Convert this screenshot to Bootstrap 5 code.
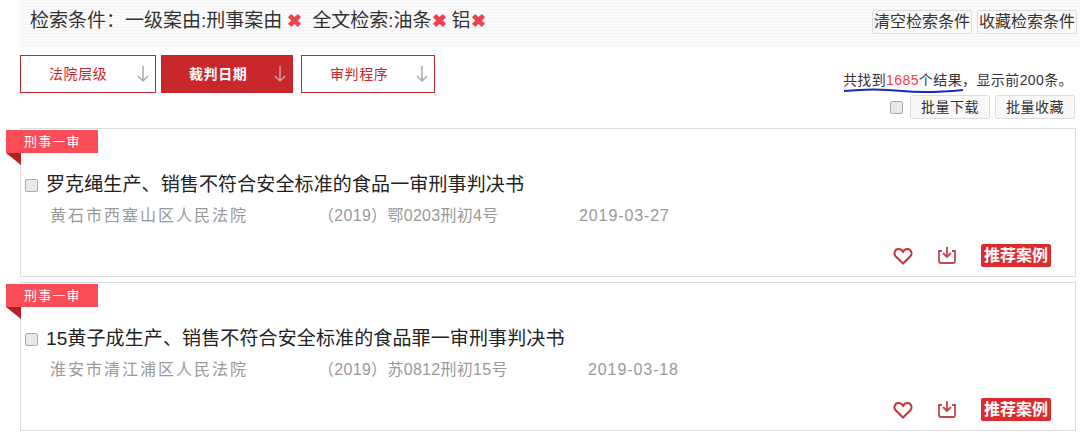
<!DOCTYPE html>
<html lang="zh-CN">
<head>
  <meta charset="UTF-8" />
  <meta name="viewport" content="width=device-width, initial-scale=1" />
  <title>检索结果</title>
  <link href="https://cdn.jsdelivr.net/npm/bootstrap@5.3.0/dist/css/bootstrap.min.css" rel="stylesheet" />
  <style>
    body { font-family: "Liberation Sans", "Noto Sans CJK SC", sans-serif; color: #333; background: #fff; overflow: hidden; }
    .page-box { width: 1080px; height: 435px; padding-left: 20px; }
    .search-bar { height: 48px; padding: 5px 3px 0 10px; background: repeating-linear-gradient(#f4f4f4 0 1px, #fbfbfb 1px 3px); }
    .search-text { font-size: 19px; line-height: 32px; }
    .x-mark { color: #f0404a; font-weight: 700; font-size: 18px; }
    .x-gap-a { margin: 0 10px 0 5px; }
    .x-gap-b { margin-right: 5px; }
    .plain-btn { background: #f8f8f8; border: 1px solid #ddd; border-radius: 2px; color: #333; font-size: 16px; line-height: 22px; padding: 0 1px; }
    .small-btn { font-size: 14px; letter-spacing: .5px; padding: 0 10px; }
    .btn-pair { gap: 5px; padding-top: 5px; }
    .filter-row { margin-top: 7px; height: 38px; }
    .filter-btn { height: 38px; border: 1px solid #c8272c; background: #fff; color: #c8272c; font-size: 14px; letter-spacing: .6px; position: relative; }
    .filter-btn.is-on { background: #c8272c; color: #fff; font-weight: 700; }
    .filter-arrow { position: absolute; right: 5px; top: 9px; }
    .result-info { font-size: 14px; line-height: 20px; padding: 22px 7px 0 0; position: relative; }
    .count-line { letter-spacing: .4px; }
    .count-num { color: #f0404a; }
    .scribble { position: absolute; left: 0; top: 16px; }
    .batch-row { margin: 5px -2px 0 0; }
    .result-head { height: 72px; }
    .check-box { width: 13px; height: 13px; background: #e9e9e9; border: 1px solid #aaa; border-radius: 2px; flex: none; }
    .case-box { width: 1056px; height: 149px; border: 1px solid #ddd; position: relative; padding: 43px 0 0 4px; margin-bottom: 5px; }
    .case-tag { position: absolute; left: -15px; top: 1px; width: 92px; height: 23px; padding-left: 18px; background: #fb4d58; color: #fff; font-size: 13px; line-height: 23px; letter-spacing: 1.2px; }
    .tag-fold { position: absolute; left: -15px; top: 24px; width: 0; height: 0; border-top: 12px solid #b81d24; border-left: 15px solid transparent; }
    .case-title { font-size: 19px; line-height: 26px; color: #222; letter-spacing: .12px; }
    .case-meta { font-size: 16px; line-height: 22px; color: #999; padding: 7px 0 0 25px; }
    .court-name { width: 268px; letter-spacing: 2px; }
    .case-no { letter-spacing: .3px; }
    .case-date { letter-spacing: .9px; }
    .case-actions { position: absolute; right: 24px; bottom: 9px; }
    .recommend-tag { background: #dc2a2e; color: #fff; font-size: 16px; font-weight: 700; line-height: 23px; padding: 0 3px; border-radius: 2px; }
  </style>
  <script src="https://cdn.jsdelivr.net/npm/bootstrap@5.3.0/dist/js/bootstrap.bundle.min.js"></script>
</head>
<body>
  <div class="page-box">
    <div class="search-bar d-flex justify-content-between align-items-start">
      <div class="search-text d-flex text-nowrap">
        <span>检索条件：一级案由:刑事案由</span><span class="x-mark x-gap-a">✖</span>
        <span>全文检索:油条</span><span class="x-mark x-gap-b">✖</span>
        <span>铝</span><span class="x-mark">✖</span>
      </div>
      <div class="d-flex btn-pair">
        <button class="plain-btn">清空检索条件</button>
        <button class="plain-btn">收藏检索条件</button>
      </div>
    </div>

    <div class="d-flex justify-content-between result-head">
      <div class="filter-row d-flex">
        <button class="filter-btn text-start" style="width:136px;padding-left:28px">法院层级<svg class="filter-arrow" width="14" height="18" viewBox="0 0 14 18" fill="none" stroke="#aaa" stroke-width="1.5"><path d="M7 1v15M2 11l5 5 5-5"/></svg></button>
        <button class="filter-btn is-on text-start" style="width:132px;padding-left:27px;margin-left:5px">裁判日期<svg class="filter-arrow" width="14" height="18" viewBox="0 0 14 18" fill="none" stroke="#c9a0a0" stroke-width="1.5"><path d="M7 1v15M2 11l5 5 5-5"/></svg></button>
        <button class="filter-btn text-start" style="width:134px;padding-left:28px;margin-left:8px">审判程序<svg class="filter-arrow" width="14" height="18" viewBox="0 0 14 18" fill="none" stroke="#aaa" stroke-width="1.5"><path d="M7 1v15M2 11l5 5 5-5"/></svg></button>
      </div>
      <div class="result-info text-end">
        <div class="position-relative count-line">共找到<span class="count-num">1685</span>个结果，显示前200条。
          <svg class="scribble" width="122" height="8" viewBox="0 0 122 8" fill="none" stroke="#1a25c8" stroke-width="2"><path d="M1 5c20-2 40-2 58 0 20 2 40 1 61-1"/></svg>
        </div>
        <div class="batch-row d-flex justify-content-end align-items-center">
          <span class="check-box" style="margin-right:7px"></span>
          <button class="plain-btn small-btn" style="margin-right:5px">批量下载</button>
          <button class="plain-btn small-btn">批量收藏</button>
        </div>
      </div>
    </div>

    <div id="caseList" class="pt-2"></div>
  </div>

  <script>
    const cases = [
      { title: '罗克绳生产、销售不符合安全标准的食品一审刑事判决书', court: '黄石市西塞山区人民法院', no: '（2019）鄂0203刑初4号', date: '2019-03-27', noWidth: 261 },
      { title: '15黄子成生产、销售不符合安全标准的食品罪一审刑事判决书', court: '淮安市清江浦区人民法院', no: '（2019）苏0812刑初15号', date: '2019-03-18', noWidth: 270 }
    ];
    const heart = '<svg width="20" height="18" viewBox="0 0 20 18" fill="none" stroke="#c0343a" stroke-width="2"><path d="M10 16.5 2.6 9.2C.4 6.900 1.600 2 5.600 2 7.600 2 9 3.200 10 4.800 11 3.200 12.400 2 14.400 2c4 0 5.200 4.900 3 7.200z"/></svg>';
    const save = '<svg width="20" height="18" viewBox="0 0 20 18" fill="none" stroke="#c0474c" stroke-width="1.8"><path d="M5 4H2v10c0 1.300.7 2 2 2h12c1.300 0 2-.7 2-2V4h-3M10 0v9M6 6l4 4 4-4"/></svg>';
    document.getElementById('caseList').innerHTML = cases.map(c => `
      <div class="case-box">
        <div class="case-tag">刑事一审</div>
        <div class="tag-fold"></div>
        <div class="case-title d-flex align-items-center"><span class="check-box me-2"></span>${c.title}</div>
        <div class="case-meta d-flex">
          <span class="court-name">${c.court}</span>
          <span class="case-no" style="width:${c.noWidth}px">${c.no}</span>
          <span class="case-date">${c.date}</span>
        </div>
        <div class="case-actions d-flex align-items-center">
          <span class="me-4 d-flex">${heart}</span>
          <span class="me-4 d-flex">${save}</span>
          <span class="recommend-tag">推荐案例</span>
        </div>
      </div>`).join('');
  </script>
</body>
</html>
